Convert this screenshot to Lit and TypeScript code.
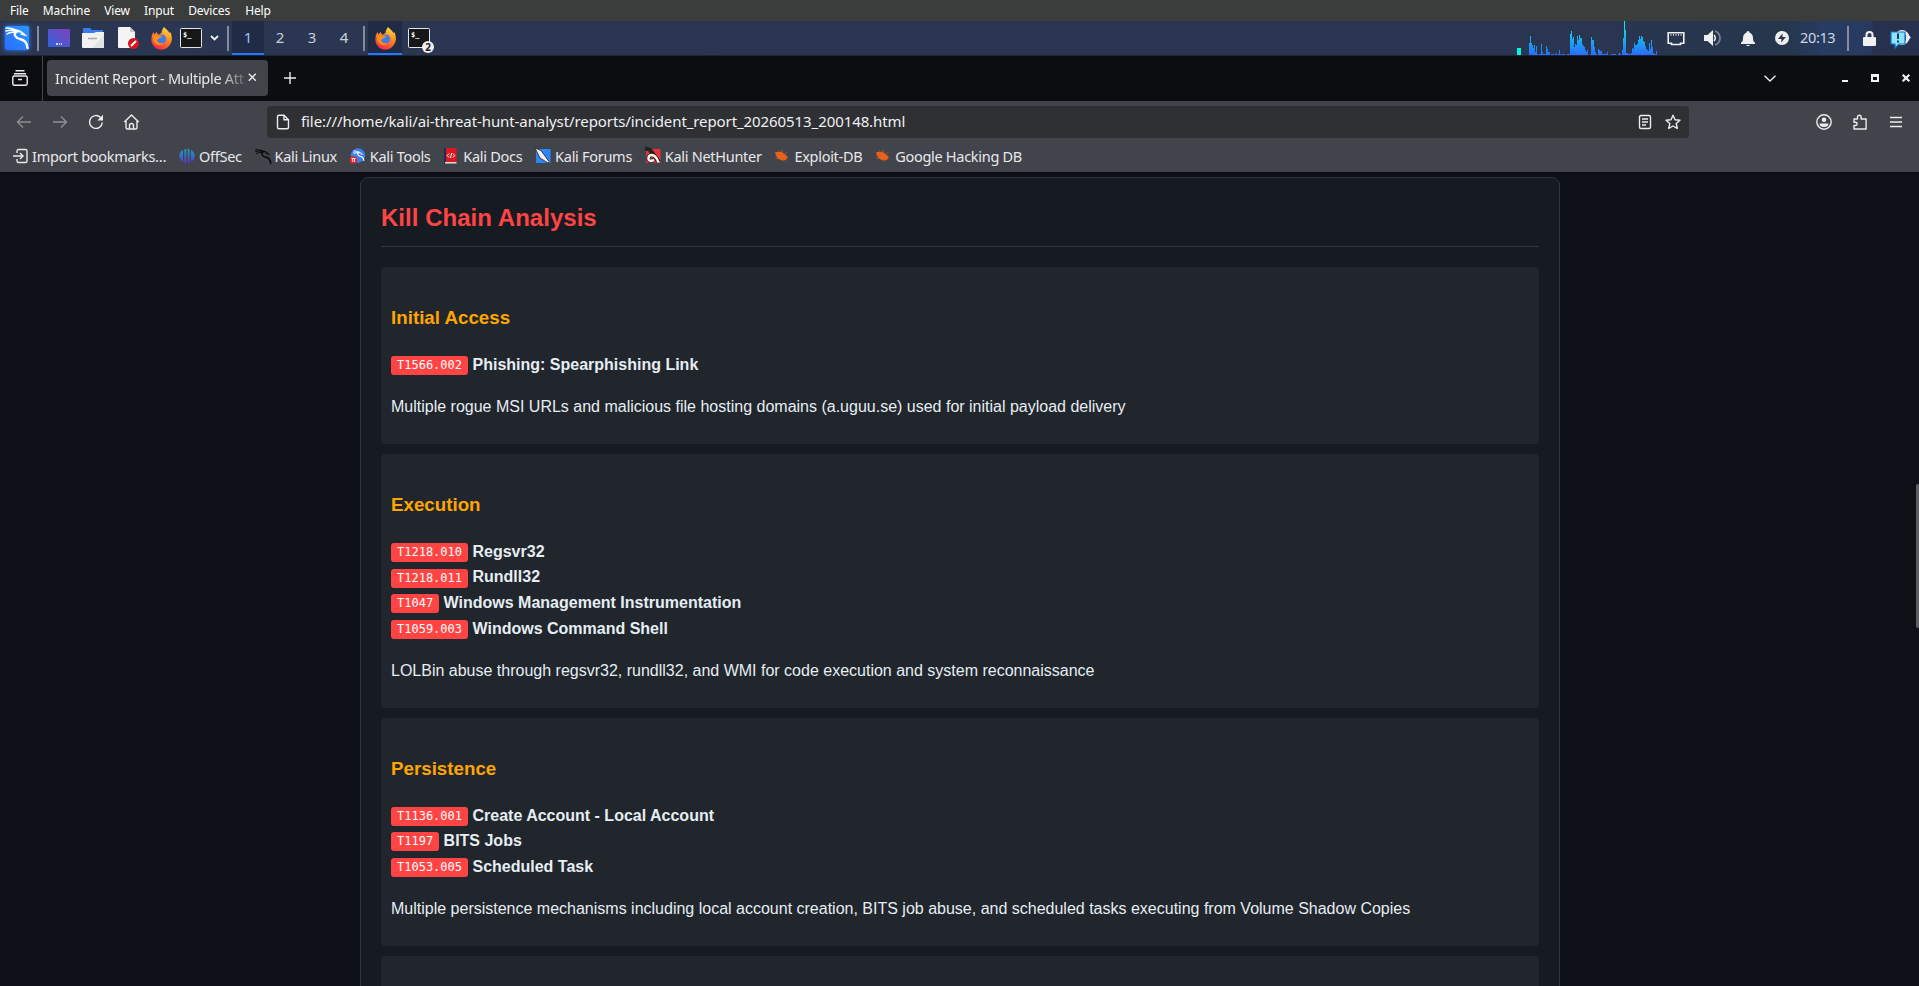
import { LitElement, html, css, svg } from "lit";
import { customElement } from "lit/decorators.js";

const dragon = svg`<path d="M1 2c5 0 9 1 13 4M1 5c4-1 8-1 11 1M2 8c3-2 6-2 9-1M10 4c4 0 7 2 10 5l-4-1" fill="none" stroke="currentColor" stroke-width="1.500" stroke-linecap="round"/><path d="M11 5c-3 4 0 7 4 8 4 .7 7 3 7.500 9" fill="none" stroke="currentColor" stroke-width="2.300" stroke-linecap="round"/>`;

const fox = svg`<defs><linearGradient id="fx" x1=".8" y1="0" x2=".3" y2="1"><stop offset="0" stop-color="#ffe14a"/><stop offset=".45" stop-color="#ff8a1e"/><stop offset="1" stop-color="#f2264a"/></linearGradient></defs>
<path d="M13 0c2 2 4.500 4 5.500 6l.8-1c2 4 2.200 9 0 12a10 10 0 0 1-18 0C-.5 13 .5 8 2.500 5l1 2.500 2-2.500 2 3c1-1 2-1.500 3-2 0-2 1-4 2.500-6z" fill="url(#fx)"/><circle cx="10.500" cy="12" r="4.600" fill="#3d7de8"/><path d="M2 8.500h7c2 0 3 1.500 0 2.500l-3 2c1 3 4 4 7 3-3 4-10 2-11-3z" fill="#ff8a1e"/>`;

const term = svg`<rect x=".5" y=".5" width="21" height="19" rx=".8" fill="#161718" stroke="#e6e6e6"/><text x="3" y="9" class="prompt">$_</text>`;

const bug = svg`<path d="M1 4c3 .5 4-1 6.500 0C10 5 12 7 13.500 9l-1.500 3c-3 1-6.500 0-8.500-2C2 8.500 2 6.500 1 4z" fill="#e9601a"/><path d="M4 2l1.500 2.500M8 1.500l.5 3M11 5.500l2.500-.8M13 9.500l2 .5M3 8H1M4 10.500H1.500M9 11l-1 2.500" stroke="#a85a38" stroke-width=".7" fill="none"/>`;

const load: [number, number][] = [[0,12],[1,19],[2,12],[3,10],[4,7],[5,10],[6,3],[7,9],[8,1],[10,1],[11,1],[12,11],[13,3],[14,1],[15,1],[16,1],[17,9],[18,6],[19,3],[20,3],[22,1],[23,1],[24,1],[26,1],[27,2],[29,1],[30,5],[31,1],[33,1],[34,1],[35,1],[38,1],[39,1],[40,1],[41,21],[42,24],[43,16],[44,18],[45,8],[46,11],[47,10],[48,19],[49,15],[50,20],[51,17],[52,17],[53,11],[54,9],[55,8],[56,5],[57,3],[58,5],[61,1],[62,18],[63,15],[64,15],[65,8],[66,3],[67,1],[69,6],[70,5],[71,4],[72,4],[73,1],[74,1],[75,1],[76,1],[77,1],[78,3],[82,1],[83,1],[84,1],[85,1],[86,1],[89,1],[90,2],[91,1],[93,5],[94,17],[95,34],[96,25],[97,2],[98,2],[99,1],[100,1],[101,1],[102,2],[103,7],[104,6],[105,12],[106,10],[107,10],[108,11],[109,15],[110,19],[111,16],[112,19],[113,18],[114,14],[115,13],[116,9],[117,6],[118,5],[119,4],[120,12],[121,6],[122,15],[123,8],[124,2],[125,1],[126,1],[127,4]];

const marks: [string, unknown][] = [
  ["Import bookmarks…", svg`<path d="M5 5V3q0-1.500 1.500-1.500h7q1.500 0 1.500 1.500v10q0 1.500-1.500 1.500h-7q-1.500 0-1.500-1.500v-2M1 8h10M8 5l3 3-3 3" fill="none" stroke="#e8e8ea" stroke-width="1.400"/>`],
  ["OffSec", svg`<defs><linearGradient id="of" x1="0" y1="0" x2="0" y2="1"><stop offset="0" stop-color="#18a5c4"/><stop offset="1" stop-color="#5a2fc4"/></linearGradient></defs><path d="M4 2v12C-1 11-1 5 4 2zM5.300 1.500L7.300.8v15l-2-.8zM8.700.8l2 .7V15l-2 .8zM12 2v12c5-3 5-9 0-12z" fill="url(#of)"/>`],
  ["Kali Linux", svg`<g color="#0b0b0d" transform="scale(.7)">${dragon}</g>`],
  ["Kali Tools", svg`<circle cx="8" cy="7.500" r="7.200" fill="#3a7ef0"/><g color="#fff" transform="translate(3 2) scale(.48)">${dragon}</g><circle cx="3.500" cy="12" r="3.800" fill="#e5252c"/><path d="M1.500 10.500h4M2.800 10.500v3.500M4.500 10.500v3.500" stroke="#fff" stroke-width=".9"/>`],
  ["Kali Docs", svg`<rect x="1" y="0" width="12.500" height="15" fill="#dd1720"/><rect x="1" y="0" width="2" height="16" fill="#1e2e52"/><rect x="2" y="14" width="11.500" height="1.500" fill="#ddd"/><path d="M6 5.500L4.300 7.500 6 9.500M10 5.500l1.700 2L10 9.500M8.700 5l-1.200 5" stroke="#fff" fill="none"/>`],
  ["Kali Forums", svg`<rect x="1" y="1" width="14.500" height="14" fill="#2d86f5"/><path d="M0 0l6 2.500 8 11-1 1.500-8-5z" fill="#f0f0f0" stroke="#222" stroke-width=".8"/>`],
  ["Kali NetHunter", svg`<rect x="1" y="1" width="14.500" height="14" fill="#e8303a"/><path d="M0 0l5 2 9 12M13 14c-1-4-3-7-6.500-7S2 13 6 13l3-1" stroke="#222" stroke-width="4" fill="none"/><path d="M13.500 14.500C12 10 10 7 6.500 7S2 13 6 13l3-1" stroke="#f4f4f4" stroke-width="2.400" fill="none"/>`],
  ["Exploit-DB", bug],
  ["Google Hacking DB", bug],
];

const stages = [
  { name: "Initial Access", items: [["T1566.002", "Phishing: Spearphishing Link"]], note: "Multiple rogue MSI URLs and malicious file hosting domains (a.uguu.se) used for initial payload delivery" },
  { name: "Execution", items: [["T1218.010", "Regsvr32"], ["T1218.011", "Rundll32"], ["T1047", "Windows Management Instrumentation"], ["T1059.003", "Windows Command Shell"]], note: "LOLBin abuse through regsvr32, rundll32, and WMI for code execution and system reconnaissance" },
  { name: "Persistence", items: [["T1136.001", "Create Account - Local Account"], ["T1197", "BITS Jobs"], ["T1053.005", "Scheduled Task"]], note: "Multiple persistence mechanisms including local account creation, BITS job abuse, and scheduled tasks executing from Volume Shadow Copies" },
];

@customElement("app-root")
export class AppRoot extends LitElement {
  static styles = css`
    :host { display: flex; flex-direction: column; height: 986px; overflow: hidden; background: #0d1117; font-family: "Noto Sans", sans-serif; color: #e8e8ea; }
    * { box-sizing: border-box; }
    svg { display: block; flex: none; overflow: visible; }
    .line { fill: none; stroke: #ececee; stroke-width: 1.400; }
    .menu { height: 21px; flex: none; background: #3b3c3c; display: flex; align-items: center; padding-left: 10px; gap: 14.100px; font-size: 12px; letter-spacing: -.12px; color: #fff; }
    .menu span:last-child { margin-left: 1px; }
    .panel { height: 35px; flex: none; border-bottom: 1px solid #1c2435; background: linear-gradient(90deg, #2b3752, #2a3651 85%, #26364c 90%, #25364d 93%, #283b61 95%, #283a60 97.500%, #27314e 97.600%); display: flex; align-items: center; padding-left: 5px; }
    .prompt { font: bold 7px "DejaVu Sans Mono", monospace; fill: #fff; }
    .glow { filter: drop-shadow(0 0 2px #2a7fff); }
    .sep { width: 2px; height: 25px; background: #868c9b; flex: none; }
    .ws { width: 32px; height: 34px; display: grid; place-items: center; font-size: 15px; color: #c9d0dc; flex: none; padding-bottom: 2px; }
    .on { background: #202b45; box-shadow: inset 0 -2px #2777ff; }
    .ws.on { color: #9cc0f5; }
    .task { width: 34px; height: 34px; display: grid; place-items: center; flex: none; }
    .m3 { margin-left: 3px; } .m6 { margin-left: 6px; } .m8 { margin-left: 8px; } .m9 { margin-left: 9px; }
    .m11 { margin-left: 11px; } .m12 { margin-left: 12px; } .m14 { margin-left: 14px; } .m20 { margin-left: 20px; }
    .push { margin-left: auto; }
    .count { font: bold 10px "Noto Sans", sans-serif; fill: #222; text-anchor: middle; }
    .clock { width: 36px; margin: 0 11px; padding-bottom: 2px; font-size: 14.500px; letter-spacing: -.35px; color: #cdd6e6; white-space: nowrap; }
    .tabs { height: 45px; flex: none; background: #0c0d11; display: flex; align-items: center; padding: 0 9px 1px 0; }
    .side { width: 43px; height: 45px; border-right: 1px solid #45464c; padding: 14px 0 0 12px; flex: none; }
    .tab { width: 221px; height: 36px; margin-left: 4px; border-radius: 4px; background: #42444c; display: flex; align-items: center; padding: 0 8px 1px; font-size: 14.500px; letter-spacing: -.28px; }
    .title { width: 192.500px; white-space: nowrap; -webkit-mask-image: linear-gradient(90deg, #000 165px, transparent 196px); }
    .plus { margin-left: 15.500px; }
    .min { margin-left: 66px; } .win { margin-left: 23px; }
    .bar { height: 41px; flex: none; background: #42444c; display: flex; align-items: center; padding: 0 15px 0 16px; gap: 20px; }
    .dim { opacity: .45; }
    .url { width: 1422px; height: 32px; margin-left: 108px; border-radius: 4px; background: #2f3034; display: flex; align-items: center; padding: 0 8px; font-size: 15px; letter-spacing: -.085px; color: #f0f0f2; }
    .addr { margin: 0 auto 2px 10px; white-space: nowrap; }
    .star { margin-left: 12px; }
    .marks { height: 30px; flex: none; background: #42444c; display: flex; align-items: center; padding: 0 0 3px 12px; font-size: 14.500px; letter-spacing: -.29px; }
    .mark { display: flex; align-items: center; gap: 4px; margin-right: 12.800px; white-space: nowrap; }
    .page { flex: 1; min-height: 0; overflow: hidden; padding: 4px 0 0 360px; position: relative; border-top: 1px solid #0a0b0e; font-family: "Liberation Sans", Arial, sans-serif; font-size: 16px; line-height: 25.600px; color: #e6edf3; }
    .card { width: 1200px; height: 900px; border: 1px solid #30363d; border-radius: 8px; background: #161b22; padding: 20px; }
    h2 { margin: 0 0 20px; padding-top: 1px; height: 49px; border-bottom: 1px solid #30363d; font-size: 24px; line-height: 38.400px; letter-spacing: .03px; color: #ff4444; }
    .stage { background: #21262d; border-radius: 4px; padding: 35.900px 10px 24.600px; margin-bottom: 10px; }
    h3 { margin: 0 0 19px; font-size: 18.720px; line-height: 30px; letter-spacing: .02px; color: #ffa500; }
    .code { font: 12px/15px "DejaVu Sans Mono", monospace; background: #ff4444; color: #fff; border-radius: 3px; padding: 2px 6px; display: inline-block; vertical-align: .8px; }
    .item { height: 25.600px; white-space: nowrap; font-weight: bold; }
    p { margin: 16.300px 0 0; white-space: nowrap; }
    .thumb { position: absolute; right: 0; top: 311px; width: 3px; height: 144px; background: #5c5e61; border-radius: 2px 0 0 2px; }
  `;

  private panel() {
    return html`<div class="panel">
      <svg class="glow" width="24" height="24"><defs><linearGradient id="kb" x1="0" y1="1" x2="1" y2="0"><stop stop-color="#2b6cff"/><stop offset="1" stop-color="#2899ff"/></linearGradient></defs><rect width="24" height="24" rx="2" fill="url(#kb)"/><g color="#fff">${dragon}</g></svg>
      <div class="sep m8"></div>
      <svg class="m9" width="22" height="18"><defs><linearGradient id="dk" x1="0" y1="1" x2="1" y2="0"><stop stop-color="#2f62e0"/><stop offset="1" stop-color="#8042b8"/></linearGradient></defs><rect width="22" height="18" rx="1" fill="url(#dk)"/><path d="M8 15h2m1 0h1m1 0h1" stroke="#fff" stroke-width="1.300"/></svg>
      <svg class="m12" width="22" height="20"><path d="M1 8V1q0-1 1-1h6l2 2h10q1 0 1 1v5z" fill="#3a7bea"/><path d="M0 5h12l2-1h8v15q0 1-1 1H1q-1 0-1-1z" fill="#f1f1f1"/><path d="M22 7v13H10z" fill="#e3e3e5"/><path d="M6 10.500h9" stroke="#aaa" stroke-width="1.500"/></svg>
      <svg class="m14" width="21" height="22"><path d="M1 0h11l5 5v16H1q-1 0-1-1V1q0-1 1-1z" fill="#f4f4f4"/><path d="M12 0v5h5z" fill="#c8c8ca"/><circle cx="15.500" cy="16.500" r="5.500" fill="#d6161e"/><path d="M13 19l5-5" stroke="#fff" stroke-width="2"/></svg>
      <svg class="m12" width="21" height="22">${fox}</svg>
      <svg class="m8" width="22" height="20">${term}</svg>
      <svg class="m8" width="9" height="6"><path d="M1 1l3.500 3.500L8 1" fill="none" stroke="#eee" stroke-width="1.800"/></svg>
      <div class="sep m8"></div><div class="ws on m3">1</div><div class="ws">2</div><div class="ws">3</div><div class="ws">4</div>
      <div class="sep m3"></div>
      <div class="task on m3"><svg width="21" height="22">${fox}</svg></div>
      <svg class="m6" width="22" height="20">${term}<circle cx="20" cy="19" r="6" fill="#f0f0f0"/><text class="count" x="20" y="22.500">2</text></svg>
      <svg class="push" width="140" height="34"><defs><linearGradient id="ld" gradientUnits="userSpaceOnUse" x1="0" y1="0" x2="0" y2="34"><stop stop-color="#00ffd8"/><stop offset="1" stop-color="#2a6cff"/></linearGradient></defs><rect y="27" width="4" height="7" fill="#00f5dc"/>${load.map(([x, h]) => svg`<rect x=${12 + x} y=${34 - h} width="1" height=${h} fill="url(#ld)"/>`)}</svg>
      <svg class="m11" width="16" height="13"><path d="M.2.800h15.600v10.400h-3.300v1.300H3.500v-1.300H.2z" fill="none" stroke="#f0f0f0" stroke-width="1.600"/><path d="M3 2v1.800M5.500 2v1.800M8 2v1.800M10.500 2v1.800M13 2v1.800" stroke="#d0d4da"/></svg>
      <svg class="m20" width="17" height="16"><path d="M0 5h3.500L9 0v16l-5.500-5H0z" fill="#f0f0f0"/><path d="M10 5q2.500 3 0 6" fill="none" stroke="#eee" stroke-width="1.500"/><path d="M11 1q5 2 5 7t-5 7" fill="none" stroke="#7a8296" stroke-width="1.700"/></svg>
      <svg class="m20" width="14" height="15"><path d="M5.500 1.500a1.500 1.500 0 0 1 3 0Q12 3 12 7q0 4 2 4.500V13H0v-1.500Q2 11 2 7q0-4 3.500-5.500zM5.500 14h3v1h-3z" fill="#f0f0f0"/></svg>
      <svg class="m20" width="14" height="14"><circle cx="7" cy="7" r="7" fill="#f0f0f0"/><path d="M7.500 2.500L3 8h3.500L6 11.500 11 6H7.500z" fill="#28344f"/></svg>
      <div class="clock">20:13</div><div class="sep"></div>
      <svg class="m14" width="13" height="15"><path d="M3.500 7V4a3 3 0 0 1 6 0v3" fill="none" stroke="#f0f0f0" stroke-width="2"/><rect y="6" width="13" height="9" rx="1" fill="#f0f0f0"/></svg>
      <svg class="m14" width="29" height="18"><circle cx="12" cy="8.500" r="6" fill="none" stroke="#eee" stroke-width="3"/><path d="M16 4l5 4.500-5 4.500z" fill="#eee"/><path d="M1 3h14v12H9l-4 4v-4H1z" fill="#8ce4ff" stroke="#1574c4" stroke-width="1.200"/><path d="M8 4.500v5.500M8 11.500v2" stroke="#111" stroke-width="1.600"/></svg>
    </div>`;
  }

  render() {
    return html`<div class="menu">${["File", "Machine", "View", "Input", "Devices", "Help"].map((t) => html`<span>${t}</span>`)}</div>
      ${this.panel()}
      <div class="tabs">
        <div class="side"><svg width="16" height="16"><path class="line" d="M3.500.8h9M2 3.800h12M.8 7.500q0-1.500 1.500-1.500h11.400q1.500 0 1.500 1.500v6q0 1.700-1.500 1.700H2.300q-1.500 0-1.500-1.700zM6 9.500h4"/></svg></div>
        <div class="tab"><span class="title">Incident Report - Multiple Att</span><svg width="9" height="9"><path class="line" d="M.8.8l7 7M7.800.8l-7 7"/></svg></div>
        <svg class="plus" width="12" height="12"><path class="line" d="M6 0v12M0 6h12"/></svg>
        <svg class="push" width="12" height="7"><path class="line" d="M.5.800L6 6 11.500.800"/></svg>
        <svg class="min" width="6" height="10"><rect y="7" width="6" height="2" fill="#f2f2f2"/></svg>
        <svg class="win" width="8" height="8"><rect x="1" y="1" width="6" height="6" fill="none" stroke="#f2f2f2" stroke-width="2"/><path d="M0 1.500h8" stroke="#f2f2f2" stroke-width="3"/></svg>
        <svg class="win" width="8" height="8"><path d="M.7.7l6.600 6.600M7.300.7L.7 7.300" stroke="#f2f2f2" stroke-width="2.200"/></svg>
      </div>
      <div class="bar">
        <svg class="dim" width="16" height="16"><path class="line" d="M15 8H1.500M7 2.500L1.500 8 7 13.500"/></svg>
        <svg class="dim" width="16" height="16"><path class="line" d="M1 8h13.500M9 2.500L14.500 8 9 13.500"/></svg>
        <svg width="16" height="16"><path class="line" d="M14.300 8.500A6.400 6.400 0 1 1 12.500 3.500"/><path d="M15 .8v5.700H9.300z" fill="#ececee"/></svg>
        <svg width="15" height="16"><path class="line" d="M.3 8L7.500 1l7.200 7M2 7v6.500q0 1.500 1.500 1.500h8q1.500 0 1.500-1.500V7M5.500 15v-3.500a2 2 0 0 1 4 0V15"/></svg>
        <div class="url"><svg width="16" height="16"><path class="line" d="M4 1.200h5l4.500 4.500v7.600q0 1.500-1.500 1.500H4q-1.500 0-1.500-1.500V2.700q0-1.500 1.500-1.500zM9 1.200v4.500h4.500"/></svg>
          <span class="addr">file:///home/kali/ai-threat-hunt-analyst/reports/incident_report_20260513_200148.html</span>
          <svg width="16" height="16"><rect class="line" x="2.500" y="1.500" width="11" height="13" rx="1.500"/><path class="line" d="M5 5h6M5 8h6M5 11h4"/></svg>
          <svg class="star" width="16" height="16"><path class="line" stroke-linejoin="round" d="M8 1.200l2 4.500 5 .5-3.800 3.300 1.100 5L8 12l-4.300 2.500 1.100-5L1 6.200l5-.5z"/></svg></div>
        <svg class="push" width="16" height="16"><circle class="line" cx="8" cy="8" r="7.200"/><circle cx="8" cy="5.800" r="2.300" fill="#ececee"/><path d="M3.500 9.500h9q0 3.500-4.500 3.500t-4.500-3.500z" fill="#ececee"/></svg>
        <svg width="16" height="16"><path class="line" stroke-linejoin="round" d="M2 5h3.500V3a1.800 1.800 0 0 1 3.600 0v2h5v10H2v-3.500h1.500a1.500 1.500 0 0 0 0-3.300H2z"/></svg>
        <svg width="16" height="16"><path class="line" d="M2 3.500h12M2 8h12M2 12.500h12"/></svg>
      </div>
      <div class="marks">${marks.map(([t, i]) => html`<span class="mark"><svg width="16" height="16">${i}</svg><span>${t}</span></span>`)}</div>
      <div class="page"><div class="card"><h2>Kill Chain Analysis</h2>
        ${stages.map((s) => html`<div class="stage"><h3>${s.name}</h3>${s.items.map(([c, n]) => html`<div class="item"><span class="code">${c}</span> ${n}</div>`)}<p>${s.note}</p></div>`)}
        <div class="stage"></div></div><div class="thumb"></div></div>`;
  }
}
